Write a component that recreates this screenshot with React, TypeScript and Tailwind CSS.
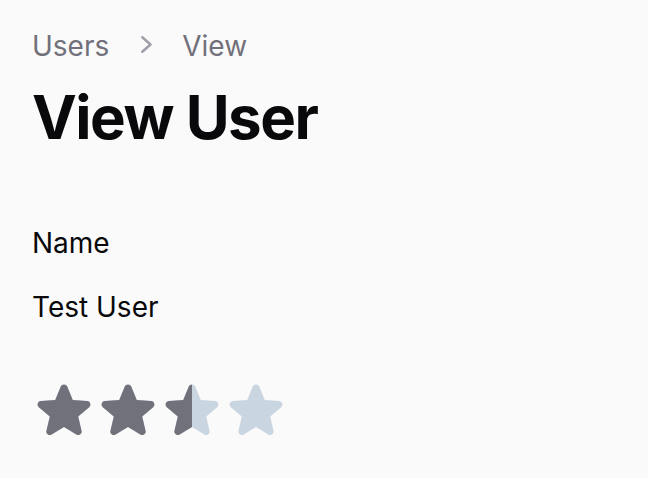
import React from "react";

const STAR =
  "M10.788 3.21c.448-1.077 1.976-1.077 2.424 0l2.082 5.006 5.404.434c1.164.093 1.636 1.545.749 2.305l-4.117 3.527 1.257 5.273c.271 1.136-.964 2.033-1.96 1.425L12 18.354 7.373 21.18c-.996.608-2.231-.29-1.96-1.425l1.257-5.273-4.117-3.527c-.887-.76-.415-2.212.749-2.305l5.404-.434 2.082-5.005Z";

function Star({ fill }: { fill: number }) {
  return (
    <div className="relative w-16 h-16">
      <svg viewBox="0 0 24 24" className="absolute inset-0 w-16 h-16 text-slate-300" fill="currentColor">
        <path fillRule="evenodd" clipRule="evenodd" d={STAR} />
      </svg>
      {fill > 0 && (
        <div className="absolute inset-y-0 left-0 overflow-hidden" style={{ width: `${fill * 100}%` }}>
          <svg viewBox="0 0 24 24" className="w-16 h-16 text-zinc-500" fill="currentColor">
            <path fillRule="evenodd" clipRule="evenodd" d={STAR} />
          </svg>
        </div>
      )}
    </div>
  );
}

export default function App() {
  const rating = 2.5;
  return (
    <div
      className="min-h-screen bg-[#fafafa] px-8 pt-[26px]"
      style={{ fontFamily: "Inter, 'Noto Sans', sans-serif" }}
    >
      {/* Breadcrumbs */}
      <nav className="flex items-center text-[28px] leading-10 text-zinc-500">
        <span>Users</span>
        <svg
          viewBox="0 0 16 20"
          className="ml-[31px] mr-[26px] w-4 h-5 text-zinc-400"
          fill="none"
          stroke="currentColor"
          strokeWidth={2.5}
          strokeLinecap="round"
          strokeLinejoin="round"
        >
          <path d="M2.3 1.3 10.5 8.5 2.3 15.7" />
        </svg>
        <span>View</span>
      </nav>

      {/* Heading */}
      <h1 className="mt-[21px] text-6xl leading-none font-bold tracking-tight text-zinc-950">
        View User
      </h1>

      {/* Entry */}
      <div className="mt-[76px] text-[28px] leading-10 text-zinc-950">
        <div>Name</div>
        <div className="mt-6">Test User</div>
      </div>

      {/* Rating */}
      <div className="mt-[51px] flex">
        {[0, 1, 2, 3].map((i) => (
          <Star key={i} fill={Math.max(0, Math.min(1, rating - i))} />
        ))}
      </div>
    </div>
  );
}
